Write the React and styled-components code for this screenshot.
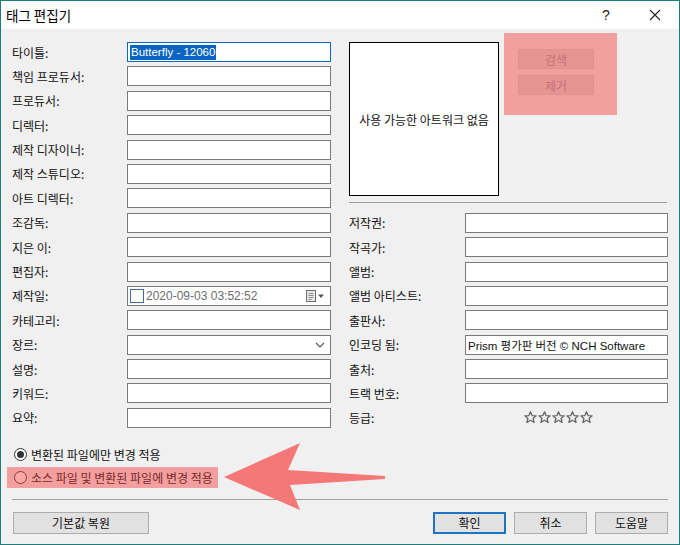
import styled, { createGlobalStyle } from "styled-components";

const GlobalStyle = createGlobalStyle`
    body {
        margin: 0;
        background: #ffffff;
        font-family: "Noto Sans CJK KR", "Noto Sans", sans-serif;
    }
`;

const leftRows = [
    "타이틀:",
    "책임 프로듀서:",
    "프로듀서:",
    "디렉터:",
    "제작 디자이너:",
    "제작 스튜디오:",
    "아트 디렉터:",
    "조감독:",
    "지은 이:",
    "편집자:",
    "제작일:",
    "카테고리:",
    "장르:",
    "설명:",
    "키워드:",
    "요약:",
];

const rightRows = [
    "저작권:",
    "작곡가:",
    "앨범:",
    "앨범 아티스트:",
    "출판사:",
    "인코딩 됨:",
    "출처:",
    "트랙 번호:",
    "등급:",
];

function Star() {
    return (
        <svg width="13" height="13" viewBox="0 0 12 12">
            <path
                d="M6 0.8 L7.5 4.2 L11.2 4.5 L8.4 6.9 L9.3 10.6 L6 8.6 L2.7 10.6 L3.6 6.9 L0.8 4.5 L4.5 4.2 Z"
                fill="none"
                stroke="#666"
                strokeWidth="1.2"
                strokeLinejoin="round"
            />
        </svg>
    );
}

function leftField(i) {
    if (i === 0) {
        return (
            <Field $focused>
                <Selected>Butterfly - 12060</Selected>
            </Field>
        );
    }
    if (i === 10) {
        return (
            <Field>
                <Check />
                <DateText>2020-09-03 03:52:52</DateText>
                <DateIcons>
                    <svg width="20" height="12" viewBox="0 0 20 12">
                        <rect x="1.5" y="0.5" width="9" height="11" fill="#e8e8e8" stroke="#6d6d6d" />
                        <path d="M3.5 3.5h5M3.5 5.5h5M3.5 7.5h5M3.5 9.5h3" stroke="#8a8a8a" />
                        <path d="M13 4.5 L19 4.5 L16 8 Z" fill="#555" />
                    </svg>
                </DateIcons>
            </Field>
        );
    }
    if (i === 12) {
        return (
            <Field>
                <Chevron>
                    <svg width="10" height="6" viewBox="0 0 10 6">
                        <polyline points="1,1 5,5 9,1" fill="none" stroke="#555" strokeWidth="1.1" />
                    </svg>
                </Chevron>
            </Field>
        );
    }
    return <Field />;
}

function rightField(i) {
    if (i === 5) {
        return (
            <Field>
                <FieldText>Prism 평가판 버전 © NCH Software</FieldText>
            </Field>
        );
    }
    if (i === 8) {
        return (
            <Stars>
                <Star />
                <Star />
                <Star />
                <Star />
                <Star />
            </Stars>
        );
    }
    return <Field />;
}

export default function App() {
    return (
        <>
            <GlobalStyle />
            <Window>
                <TitleBar>
                    <Title>태그 편집기</Title>
                    <Help>?</Help>
                    <Close>
                        <svg width="12" height="12" viewBox="0 0 12 12">
                            <path d="M1 1 L11 11 M11 1 L1 11" stroke="#222" strokeWidth="1.1" />
                        </svg>
                    </Close>
                </TitleBar>
                <Body>
                    <Form>
                        <ArtPanel>
                            <ArtTop>
                                <ArtBox>사용 가능한 아트워크 없음</ArtBox>
                                <Highlight $boxed>
                                    <SmallButton>검색</SmallButton>
                                    <SmallButton>제거</SmallButton>
                                </Highlight>
                            </ArtTop>
                            <PanelLine />
                        </ArtPanel>
                        {leftRows.map((label, i) => (
                            <Row key={label} label={label} i={i} />
                        ))}
                    </Form>
                    <Radios>
                        <RadioRow>
                            <Radio $checked />
                            <RadioText>변환된 파일에만 변경 적용</RadioText>
                        </RadioRow>
                        <Highlight>
                            <RadioRow>
                                <Radio />
                                <RadioText>소스 파일 및 변환된 파일에 변경 적용</RadioText>
                            </RadioRow>
                        </Highlight>
                    </Radios>
                    <Divider />
                    <Buttons>
                        <Button $wide>기본값 복원</Button>
                        <Spacer />
                        <Button $primary>확인</Button>
                        <Button>취소</Button>
                        <Button>도움말</Button>
                    </Buttons>
                </Body>
                <Arrow width="170" height="76" viewBox="0 0 170 76">
                    <polygon
                        points="4,39 80,5 68,32 165,38 165,41 70,47 80,72"
                        fill="#f47878"
                    />
                </Arrow>
            </Window>
        </>
    );
}

function Row({ label, i }) {
    const r = i - 7;
    return (
        <>
            <Label $col={1}>{label}</Label>
            <Cell $col={2}>{leftField(i)}</Cell>
            {r >= 0 && (
                <>
                    <Label $col={4}>{rightRows[r]}</Label>
                    <Cell $col={5}>{rightField(r)}</Cell>
                </>
            )}
        </>
    );
}

const Window = styled.div`
    position: relative;
    width: 680px;
    height: 545px;
    box-sizing: border-box;
    border: 1px solid #1f7c7a;
    background: #f0f0f0;
    display: flex;
    flex-direction: column;
    overflow: hidden;
`;

const TitleBar = styled.div`
    height: 28px;
    background: #ffffff;
    display: flex;
    align-items: center;
    padding-left: 5px;
`;

const Title = styled.div`
    font-size: 13.5px;
    color: #000;
    flex: 1;
`;

const Help = styled.div`
    font-family: "Liberation Sans", sans-serif;
    font-size: 14px;
    color: #222;
    width: 20px;
    text-align: center;
    margin-right: 33px;
`;

const Close = styled.div`
    width: 12px;
    height: 12px;
    margin-right: 18px;
    display: flex;
`;

const Body = styled.div`
    padding: 13px 11px 0 11px;
    display: flex;
    flex-direction: column;
`;

const Form = styled.div`
    display: grid;
    grid-template-columns: 115px 204px 18px 116px 203px;
    grid-auto-rows: 20px;
    row-gap: 4.4px;
`;

const Label = styled.div`
    grid-column: ${(p) => p.$col};
    font-size: 12px;
    color: #111;
    display: flex;
    align-items: center;
    white-space: nowrap;
`;

const Cell = styled.div`
    grid-column: ${(p) => p.$col};
    display: flex;
`;

const Field = styled.div`
    flex: 1;
    position: relative;
    box-sizing: border-box;
    height: 20px;
    background: #ffffff;
    border: 1px solid ${(p) => (p.$focused ? "#0a6bc2" : "#7a7a7a")};
    display: flex;
    align-items: center;
    padding: 0 2px;
    font-family: "Liberation Sans", "Noto Sans CJK KR", sans-serif;
    font-size: 12px;
`;

const Selected = styled.span`
    background: #0a64c2;
    color: #ffffff;
    font-size: 11.5px;
    line-height: 15px;
    padding: 0 1px;
`;

const FieldText = styled.span`
    color: #111;
    font-size: 11.5px;
    white-space: nowrap;
`;

const Check = styled.div`
    width: 14px;
    height: 14px;
    box-sizing: border-box;
    border: 1px solid #3f6e9e;
    background: #fff;
    margin-right: 2px;
`;

const DateText = styled.span`
    color: #6d6d6d;
    font-size: 12px;
`;

const DateIcons = styled.div`
    margin-left: auto;
    margin-right: 3px;
    display: flex;
`;

const Chevron = styled.div`
    margin-left: auto;
    margin-right: 3px;
    display: flex;
`;

const Stars = styled.div`
    display: flex;
    align-items: center;
    gap: 1px;
    padding-left: 59px;
`;

const ArtPanel = styled.div`
    grid-column: 4 / 6;
    grid-row: 1 / 8;
    display: flex;
    flex-direction: column;
`;

const ArtTop = styled.div`
    display: flex;
    align-items: flex-start;
`;

const ArtBox = styled.div`
    width: 150px;
    height: 154px;
    box-sizing: border-box;
    border: 1px solid #000;
    background: #fff;
    display: flex;
    align-items: center;
    justify-content: center;
    font-size: 12px;
    color: #111;
    white-space: nowrap;
`;

const Highlight = styled.div`
    position: relative;
    display: flex;
    flex-direction: column;
    width: fit-content;
    ${(p) =>
        p.$boxed
            ? `
        width: 113px;
        height: 82px;
        box-sizing: border-box;
        margin: -9px 0 0 5px;
        padding: 16px 0 0 14px;
        gap: 6px;
    `
            : `
        padding-right: 5px;
    `}
    &::after {
        content: "";
        position: absolute;
        inset: 0;
        background: rgba(242, 60, 60, 0.45);
        pointer-events: none;
    }
`;

const SmallButton = styled.div`
    width: 76px;
    height: 20px;
    box-sizing: border-box;
    background: #dcdcdc;
    border: 1px solid #cfcfcf;
    color: #a0a0a0;
    font-size: 12px;
    display: flex;
    align-items: center;
    justify-content: center;
`;

const PanelLine = styled.div`
    margin-top: auto;
    margin-bottom: 5px;
    height: 1px;
    background: #a0a0a0;
    margin-right: 1px;
`;

const Radios = styled.div`
    margin: 16px 0 0 -5px;
    display: flex;
    flex-direction: column;
    gap: 2px;
`;

const RadioRow = styled.div`
    height: 21px;
    display: flex;
    align-items: center;
    padding-left: 7px;
`;

const Radio = styled.div`
    width: 13px;
    height: 13px;
    box-sizing: border-box;
    border-radius: 50%;
    border: 1px solid #333;
    background: #fff;
    display: flex;
    align-items: center;
    justify-content: center;
    &::before {
        content: "";
        width: 7px;
        height: 7px;
        border-radius: 50%;
        background: ${(p) => (p.$checked ? "#333" : "transparent")};
    }
`;

const RadioText = styled.span`
    font-size: 12px;
    color: #111;
    margin-left: 4px;
    white-space: nowrap;
`;

const Divider = styled.div`
    margin-top: 11px;
    height: 1px;
    background: #a0a0a0;
`;

const Buttons = styled.div`
    margin-top: 12px;
    display: flex;
    gap: 8px;
    padding-left: 1px;
`;

const Spacer = styled.div`
    flex: 1;
`;

const Button = styled.div`
    width: ${(p) => (p.$wide ? "136px" : "73px")};
    height: 22px;
    box-sizing: border-box;
    background: #e1e1e1;
    border: ${(p) => (p.$primary ? "2px solid #1f73c4" : "1px solid #adadad")};
    font-size: 12px;
    color: #111;
    display: flex;
    align-items: center;
    justify-content: center;
`;

const Arrow = styled.svg`
    position: absolute;
    left: 219px;
    top: 437px;
`;
